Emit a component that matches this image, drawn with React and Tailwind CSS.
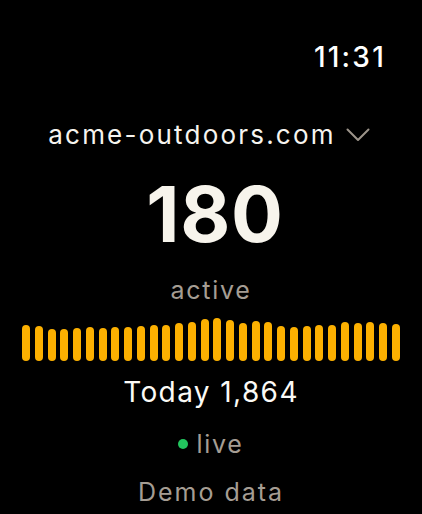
import React from 'react';

const bars = [36, 35, 32, 32, 33, 34, 33, 34, 34, 35, 36, 36, 38, 39, 42, 43, 41, 38, 40, 39, 35, 34, 35, 36, 36, 39, 38, 39, 38, 37];

const App = () => {
    return (
        <div className="w-[422px] h-[514px] overflow-hidden bg-black text-white font-['Inter',sans-serif] flex flex-col">
            {/* Status bar */}
            <div className="pt-[40px] pr-[36px] flex justify-end">
                <span className="text-[28px] leading-[34px] font-medium tracking-[0.08em]">11:31</span>
            </div>

            {/* Site picker */}
            <div className="mt-[45px] flex items-center justify-center gap-[10px] pr-[4px]">
                <span className="text-[26px] leading-[32px] tracking-[0.085em] text-[#f6f4ef]">acme-outdoors.com</span>
                <svg width="24" height="14" viewBox="0 0 24 14" fill="none" className="text-[#9c948a]">
                    <path d="M1.5 1.5 L12 12 L22.5 1.5" stroke="currentColor" strokeWidth="2" strokeLinecap="round" strokeLinejoin="round" />
                </svg>
            </div>

            {/* Active count */}
            <div className="mt-[23px] pl-[8px] text-center text-[77px] leading-[80px] font-bold tracking-[0.01em] text-[#f7f4ec]">180</div>
            <div className="mt-[21px] text-center text-[25px] leading-[30px] tracking-[0.07em] text-[#a59d93]">active</div>

            {/* Activity bars */}
            <div className="mt-[13px] h-[43px] px-[22px] flex items-end justify-between">
                {bars.map((h, i) => (
                    <div key={i} className="w-[8px] rounded-full bg-[#fcb000]" style={{ height: h }} />
                ))}
            </div>

            <div className="mt-[14px] text-center text-[28px] leading-[34px] tracking-[0.05em] text-[#fbfaf6]">Today 1,864</div>

            <div className="mt-[20px] flex items-center justify-center gap-[8px]">
                <span className="w-[10px] h-[10px] rounded-full bg-[#22c55e]" />
                <span className="text-[25px] leading-[30px] tracking-[0.07em] text-[#a59d93]">live</span>
            </div>

            <div className="mt-[18px] text-center text-[25px] leading-[30px] tracking-[0.08em] text-[#a59d93]">Demo data</div>
        </div>
    );
};

export default App;
